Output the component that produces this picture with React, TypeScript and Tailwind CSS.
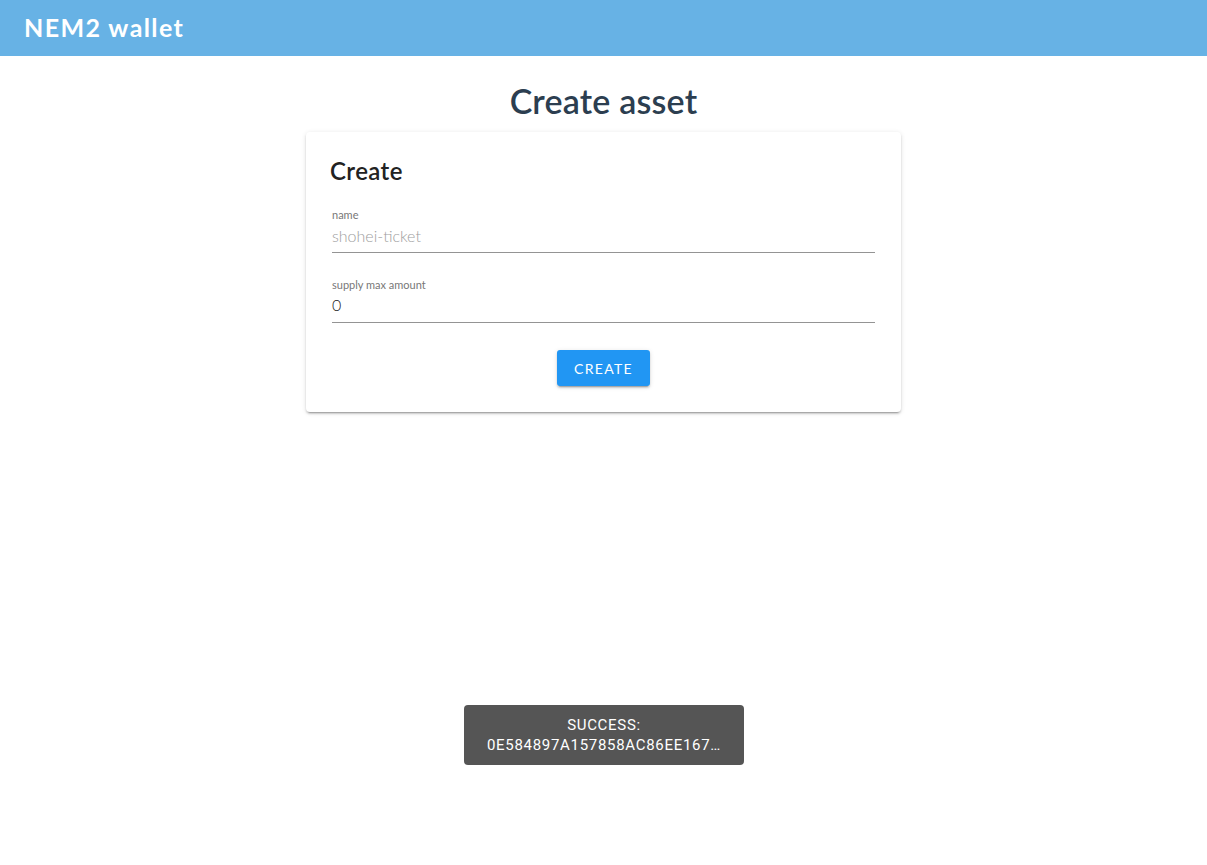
import React from 'react';

export default function App() {
  return (
    <div className="relative min-h-[865px] bg-white" style={{ fontFamily: 'Lato, "Noto Sans", sans-serif' }}>
      {/* Header */}
      <header className="h-[56px] bg-[#67b2e5] flex items-center px-6">
        <span className="text-white text-[25px] font-bold tracking-[1.4px]">NEM2 wallet</span>
      </header>

      <main className="flex flex-col items-center">
        <h1 className="mt-[24px] text-[34px] leading-[42px] font-semibold text-[#2c3e50] tracking-[0.2px]">Create asset</h1>

        <div className="mt-[10px] w-[595px] bg-white rounded-[4px] shadow-[0_2px_2px_0_rgba(0,0,0,0.14),0_3px_1px_-2px_rgba(0,0,0,0.2),0_1px_5px_0_rgba(0,0,0,0.12)] px-[26px] pt-[24px] pb-[26px]">
          <h2 className="text-[24px] leading-[30px] font-semibold text-[#222] ml-[-2px] tracking-[0.4px]">Create</h2>

          <div className="mt-[22px] flex flex-col">
            <label className="text-[11px] leading-[14px] text-[#777]">name</label>
            <div className="mt-[3px] text-[16px] leading-[22px] text-[#9e9e9e] font-light">shohei-ticket</div>
            <div className="mt-[5px] h-px bg-[#949494]" />
          </div>

          <div className="mt-[25px] flex flex-col">
            <label className="text-[11px] leading-[14px] text-[#777]">supply max amount</label>
            <div className="mt-[2px] text-[16px] leading-[22px] text-[#222] font-light">0</div>
            <div className="mt-[6px] h-px bg-[#949494]" />
          </div>

          <div className="mt-[27px] flex justify-center">
            <button className="h-[36px] px-[17px] rounded-[3px] bg-[#2196f3] text-white text-[14px] tracking-[1.3px] shadow-[0_2px_2px_0_rgba(0,0,0,0.14),0_3px_1px_-2px_rgba(0,0,0,0.2),0_1px_5px_0_rgba(0,0,0,0.12)]">
              CREATE
            </button>
          </div>
        </div>
      </main>

      {/* Toast */}
      <div className="absolute left-[464px] top-[705px] w-[280px] h-[60px] bg-[#555] rounded-[4px] flex flex-col items-center justify-center px-3 text-white text-[15px] leading-[20px] tracking-[0.7px]" style={{ fontFamily: 'Roboto, "Noto Sans", sans-serif' }}>
        <div>SUCCESS:</div>
        <div className="whitespace-nowrap text-center">0E584897A157858AC86EE167…</div>
      </div>
    </div>
  );
}
